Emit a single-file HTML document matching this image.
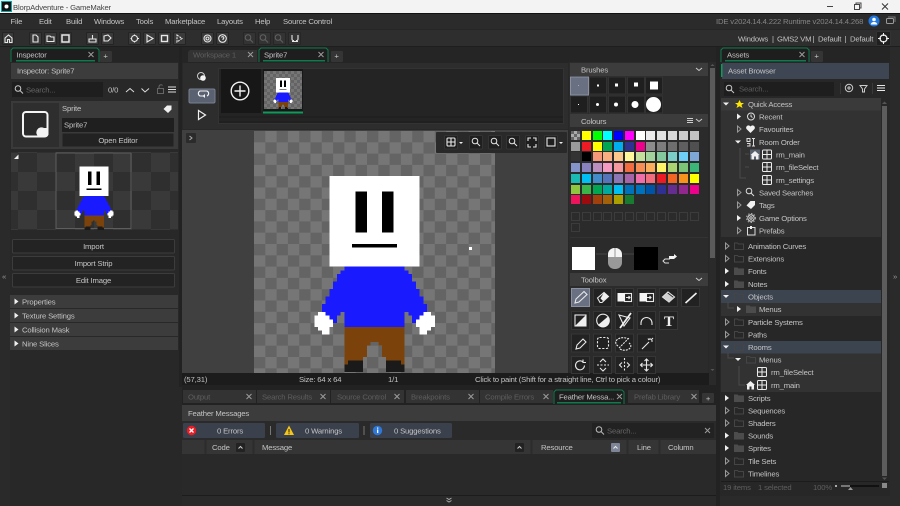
<!DOCTYPE html>
<html><head><meta charset="utf-8"><title>BlorpAdventure - GameMaker</title>
<style>
html,body{margin:0;padding:0;background:#282828;width:900px;height:506px;overflow:hidden}
svg{display:block}
text{font-family:"Liberation Sans",sans-serif;font-size:7.7px;letter-spacing:-.16px;fill:#c4c4c4;white-space:pre}
.m{text-anchor:middle}
.i{fill:none;stroke:#e8e8e8;stroke-width:1.1}
</style></head><body>
<svg width="900" height="506" viewBox="0 0 900 506" xmlns="http://www.w3.org/2000/svg">
<defs>
<pattern id="ck" width="22.6" height="22.6" patternUnits="userSpaceOnUse" x="254" y="131"><rect width="22.6" height="22.6" fill="#767676"/><rect width="11.3" height="11.3" fill="#646464"/><rect x="11.3" y="11.3" width="11.3" height="11.3" fill="#646464"/></pattern>
<pattern id="ck2" width="6" height="6" patternUnits="userSpaceOnUse" x="264" y="71"><rect width="6" height="6" fill="#767676"/><rect width="3" height="3" fill="#646464"/><rect x="3" y="3" width="3" height="3" fill="#646464"/></pattern>
<pattern id="ck4" width="6" height="6" patternUnits="userSpaceOnUse" x="571" y="131"><rect width="6" height="6" fill="#aaa"/><rect width="3" height="3" fill="#666"/><rect x="3" y="3" width="3" height="3" fill="#666"/></pattern>
<pattern id="ck3" width="38" height="38" patternUnits="userSpaceOnUse" x="18" y="153"><rect width="38" height="38" fill="#393939"/><rect width="19" height="19" fill="#2f2f2f"/><rect x="19" y="19" width="19" height="19" fill="#2f2f2f"/></pattern>
<symbol id="sp" viewBox="0 0 64 64" overflow="hidden"><g shape-rendering="crispEdges">
<path fill="#1a1aff" d="M24 36H40V37H41V38H42V40H43V42H44V44H45V46H46V48H47V49H44V51H42V49H41V48H40V52H24V48H23V49H22V51H20V49H17V48H18V46H19V44H20V42H21V40H22V38H23V37H24z"/>
<path fill="#7b430b" d="M24 52H40V62H39V61H35V60H34V57H33V56H31V57H30V60H29V61H25V62H24z"/>
<path fill="#1a1a1a" d="M24 62H25V61H29V64H24zM35 61H39V62H40V64H35z"/>
<path fill="#fff" d="M20 12h24v24H20z"/>
<path fill="#000" d="M27 16h3v11h-3zM34 16h3v11h-3zM26 30h12v1H26z"/>
<path fill="#fff" d="M17 48H19V49H20V50H21V52H20V53H20V54H18V53H17V52H16V49H17zM45 48H47V49H48V52H47V53H46V54H44V52H43V50H44V49H45z"/>
</g></symbol>
<path id="tf" d="M0-3L4 0L0 3z" fill="#f0f0f0"/>
<path id="to" d="M.5-3L4 0L.5 3z" fill="none" stroke="#9a9a9a"/>
<path id="td" d="M-3-1.500H3L0 1.500z" fill="#f0f0f0"/>
<path id="ff" d="M0-3.500H3.500L4.500-2.500H10V4H0z" fill="#4c4c4c"/>
<path id="fo" d="M.5-3H3.500L4.500-2H9.500V3.500H.5z" fill="none" stroke="#454545"/>
<g id="rm" fill="none" stroke="#ececec" stroke-width="1"><rect x=".5" y="-4.500" width="9" height="9" rx="1"/><path d="M5-4.500V4.500M.5 0H9.500"/></g>
<path id="hm" d="M0 0L4.500-4L9 0H8V4.500H5.500V1.500H3.500V4.500H1V0z" fill="#f0f0f0"/>
<path id="x" d="M-2.500-2.500L2.500 2.500M2.500-2.500L-2.500 2.500" fill="none" stroke="#9c9c9c" stroke-width="1"/>
<g id="mag" fill="none" stroke-width="1"><circle cx="-1" cy="-1" r="2.800"/><path d="M1 1L4 4"/></g>
</defs>

<rect width="900" height="506" fill="#282828"/>
<!-- title bar -->
<rect width="900" height="13.500" fill="#f3f3f3"/>
<rect y="13" width="900" height="1" fill="#111"/>
<rect x="2" y="2" width="9" height="9" fill="#111"/><rect x="1.500" y="1.500" width="10" height="10" fill="none" stroke="#0aa"/><circle cx="6.500" cy="6.500" r="2" fill="#fff"/>
<text x="13" y="10" style="fill:#444">BlorpAdventure - GameMaker</text>
<path d="M827 6.500H833" stroke="#444"/><rect x="854.500" y="4.500" width="5" height="5" fill="none" stroke="#444"/><path d="M856 4V3H861V8H860" fill="none" stroke="#444"/>
<path d="M882 3.500L888 9.500M888 3.500L882 9.500" stroke="#333"/>

<!-- menu -->
<rect y="14" width="900" height="15" fill="#2b2b2b"/>
<text x="10.500" y="24">File</text><text x="39" y="24">Edit</text><text x="66" y="24">Build</text><text x="94" y="24">Windows</text><text x="136" y="24">Tools</text><text x="165" y="24">Marketplace</text><text x="217" y="24">Layouts</text><text x="255" y="24">Help</text><text x="283" y="24">Source Control</text>
<text x="716" y="24" style="fill:#858585">IDE v2024.14.4.222</text><text x="783" y="24" style="fill:#858585">Runtime v2024.14.4.268</text>
<circle cx="874" cy="21" r="5.500" fill="#2277dd"/><circle cx="874" cy="19.500" r="1.800" fill="#fff"/><path d="M870.800 24.500a3.200 2.600 0 0 1 6.400 0z" fill="#fff"/>
<rect x="886.500" y="18.500" width="7" height="5" rx="1" fill="none" stroke="#999"/><path d="M888 17H895V22" fill="none" stroke="#777"/>

<!-- toolbar -->
<rect y="29" width="900" height="17" fill="#2e2e2e"/>
<rect y="29" width="900" height="1" fill="#262626"/>
<g fill="#3a3a3a" stroke="#242424">
<rect x="2.500" y="32.500" width="11" height="12" rx="1"/><rect x="29.500" y="32.500" width="12" height="12" rx="1"/><rect x="44.500" y="32.500" width="12" height="12" rx="1"/><rect x="59.500" y="32.500" width="12" height="12" rx="1"/><rect x="86.500" y="32.500" width="12" height="12" rx="1"/><rect x="101.500" y="32.500" width="12" height="12" rx="1"/><rect x="128.500" y="32.500" width="12" height="12" rx="1"/><rect x="143.500" y="32.500" width="12" height="12" rx="1"/><rect x="158.500" y="32.500" width="12" height="12" rx="1"/><rect x="173.500" y="32.500" width="12" height="12" rx="1"/><rect x="201.500" y="32.500" width="12" height="12" rx="1"/><rect x="216.500" y="32.500" width="12" height="12" rx="1"/>
</g>
<g fill="#333" stroke="#262626"><rect x="243.500" y="32.500" width="12" height="12" rx="1"/><rect x="258.500" y="32.500" width="12" height="12" rx="1"/><rect x="273.500" y="32.500" width="12" height="12" rx="1"/><rect x="288.500" y="32.500" width="12" height="12" rx="1"/></g>
<g class="i">
<path d="M5 38L8.500 35L12 38V42.500H9.500V39.500H7.500V42.500H5z"/>
<path d="M33 35H36L38 37V42H33z"/>
<path d="M47 36H50L51 37H54V41.500H47z"/>
<rect x="62" y="35" width="7" height="7" stroke-width="1.500"/>
<path d="M89 42V39H96V42zM92.500 39V35"/>
<path d="M104 41V36L108 35L111 38L108 41z"/>
<circle cx="134.500" cy="38.500" r="3"/><path d="M130.500 38.500H132M137 38.500H139M134.500 34.500V36M134.500 41V42.500"/>
<path d="M147 35L153 38.500L147 42z"/>
<rect x="161.500" y="35.500" width="6" height="6" stroke-width="1.400"/>
<path d="M177 35L182 38.500L177 42z" stroke-dasharray="2 1"/>
<circle cx="207.500" cy="38.500" r="3.500"/><circle cx="207.500" cy="38.500" r="1.500"/>
<circle cx="222.500" cy="38.500" r="3.800"/><path d="M221.500 37.500a1.200 1.200 0 1 1 1.500 1.500V40"/>
</g>
<g stroke="#626262"><use href="#mag" x="249" y="38.500"/><use href="#mag" x="264" y="38.500"/><use href="#mag" x="279" y="38.500"/></g>
<path d="M292 35V39a1.500 1.500 0 0 0 2 1.500M298 35V39a1.500 1.500 0 0 1-2 1.500M292 41.500H298" class="i"/>
<text x="738" y="41.500">Windows</text><text x="772" y="41.500">|</text><text x="777" y="41.500">GMS2 VM</text><text x="812.500" y="41.500">|</text><text x="818" y="41.500">Default</text><text x="844.500" y="41.500">|</text><text x="850" y="41.500">Default</text>
<rect x="876.500" y="31.500" width="14" height="14" rx="1" fill="#1f1f1f" stroke="#333"/><circle cx="883.500" cy="38.500" r="3.500" fill="none" stroke="#f0f0f0" stroke-width="1.300"/><path d="M883.500 33V36M883.500 41V44M878 38.500H881M886 38.500H889" stroke="#f0f0f0"/>

<!-- tabs row -->
<rect y="46" width="900" height="1" fill="#1e1e1e"/>
<rect y="47" width="900" height="16" fill="#252525"/>
<rect x="0" y="47" width="10" height="459" fill="#2a2a2a"/>
<rect x="179" y="47" width="3" height="340" fill="#222"/>
<rect x="890" y="47" width="10" height="459" fill="#2a2a2a"/>
<rect x="716" y="47" width="4" height="459" fill="#222"/>

<!-- LEFT PANEL -->
<rect x="11" y="62" width="168" height="444" fill="#282828"/>
<path d="M11 62V50l2-2H97l2 2V62" fill="#1e1e1e" stroke="#0f7a4d"/>
<rect x="16" y="60" width="79" height="1.500" fill="#0f7a4d"/>
<text x="16.500" y="57.500">Inspector</text><use href="#x" x="91" y="54.500"/>
<rect x="100" y="51" width="12" height="11" rx="1" fill="#353535"/><text x="105.500" y="58.500" class="m">+</text>
<rect x="11" y="63" width="167" height="16" fill="#3c3c3c"/>
<text x="17" y="73.500">Inspector: Sprite7</text>
<rect x="12" y="82" width="91" height="15" fill="#1e1e1e"/>
<use href="#mag" x="19" y="89.500" stroke="#c8c8c8"/>
<text x="26" y="92.500" style="fill:#666">Search...</text>
<text x="108" y="92.500">0/0</text>
<path d="M126 92L130 88.500L134 92M141.500 88.500L145 92L149 88.500" fill="none" stroke="#ddd"/>
<rect x="157.500" y="88.500" width="6" height="5" fill="none" stroke="#666"/><path d="M159 88.500V86.500a2 2 0 0 1 3.500-1" fill="none" stroke="#666"/>
<path d="M168 87H176M168 89.500H176M168 92H176" stroke="#ddd"/>
<rect x="11" y="101" width="167" height="48" fill="#3a3a3a"/>
<rect x="13" y="103" width="46" height="44" fill="#2e2e2e"/>
<rect x="23" y="112" width="24.500" height="24.500" rx="3" fill="#2a2a2a" stroke="#f4f4f4" stroke-width="2"/>
<path d="M48.500 128V134a3 3 0 0 1-3 3H39a5 5 0 0 1 5-9z" fill="#f4f4f4"/>
<text x="62" y="111">Sprite</text>
<path d="M163.500 109L167 105.500H171.500V109.500L168 113z" fill="#f0f0f0"/>
<rect x="62" y="118" width="112" height="14" fill="#1f1f1f"/><text x="64" y="127.500">Sprite7</text>
<rect x="62.500" y="133.500" width="111" height="13" fill="#222"/><text x="118" y="143" class="m">Open Editor</text>
<rect x="11" y="152" width="167" height="78" fill="url(#ck3)"/>
<rect x="56" y="153" width="75" height="75.500" fill="none" stroke="#5e5e5e"/>
<svg x="55" y="152" width="78" height="78"><use href="#sp" width="78" height="78"/></svg>
<path d="M14 159L18.500 154.500V159z" fill="#f0f0f0"/>
<g fill="#232323" stroke="#3c3c3c"><rect x="12.500" y="239.500" width="162" height="13.500" rx="1"/><rect x="12.500" y="256.500" width="162" height="13.500" rx="1"/><rect x="12.500" y="273.500" width="162" height="13.500" rx="1"/></g>
<text x="93.500" y="249" class="m">Import</text><text x="93.500" y="266" class="m">Import Strip</text><text x="93.500" y="283" class="m">Edit Image</text>
<g fill="#3c3c3c"><rect x="10" y="295" width="168" height="13"/><rect x="10" y="309" width="168" height="13"/><rect x="10" y="323" width="168" height="13"/><rect x="10" y="337" width="168" height="13"/></g>
<use href="#tf" x="14.500" y="301.500"/><use href="#tf" x="14.500" y="315.500"/><use href="#tf" x="14.500" y="329.500"/><use href="#tf" x="14.500" y="343.500"/>
<text x="22" y="304.500">Properties</text><text x="22" y="318.500">Texture Settings</text><text x="22" y="332.500">Collision Mask</text><text x="22" y="346.500">Nine Slices</text>
<text x="4" y="279" class="m" style="fill:#999">«</text>
<text x="895" y="279" class="m" style="fill:#999">»</text>

<!-- CENTRE tabs -->
<path d="M188 62V52l2-2H257V62z" fill="#333"/><text x="193" y="57.500" style="fill:#5e5e5e">Workspace 1</text><use href="#x" x="250.500" y="54.500"/>
<path d="M259 62V50l2-2H326l2 2V62" fill="#1e1e1e" stroke="#0f7a4d"/><rect x="263" y="60" width="62" height="1.500" fill="#0f7a4d"/>
<text x="264" y="57.500">Sprite7</text><use href="#x" x="321" y="54.500"/>
<rect x="331" y="51" width="12" height="11" rx="1" fill="#353535"/><text x="336.500" y="58.500" class="m">+</text>

<!-- frame strip -->
<rect x="183" y="63" width="385" height="66" fill="#2d2d2d"/>
<rect x="218.500" y="68.500" width="345" height="55" fill="#242424" stroke="#333"/>
<rect x="221" y="69" width="40" height="44" fill="#171717"/>
<circle cx="240" cy="91" r="8.800" fill="none" stroke="#f2f2f2" stroke-width="1.400"/><path d="M240 85.500V96.500M234.500 91H245.500" stroke="#f2f2f2" stroke-width="1.400"/>
<rect x="263" y="69" width="40" height="43" fill="#171717"/>
<rect x="264" y="71" width="38" height="38" fill="url(#ck2)"/>
<svg x="264" y="71" width="38" height="38"><use href="#sp" width="38" height="38"/></svg>
<rect x="263" y="111.500" width="40" height="2" fill="#0d9a5b"/>
<path d="M219 117H563M219 122H563" stroke="#1c1c1c"/>
<circle cx="201" cy="76" r="3.500" fill="none" stroke="#ccc"/><circle cx="203" cy="78" r="2.800" fill="#f4f4f4"/>
<rect x="189" y="89" width="26" height="14" rx="1.500" fill="#5a6171" stroke="#78808f"/>
<path d="M207 96a3 2.800 0 0 0 0-5H200a3 2.800 0 0 0 0 5h4" fill="none" stroke="#f4f4f4" stroke-width="1.100"/><path d="M205 94L202.500 96L205 98z" fill="#f4f4f4"/>
<path d="M198.500 110.500L205.500 115L198.500 119.500z" fill="none" stroke="#f0f0f0" stroke-width="1.200"/>

<!-- canvas -->
<rect x="182" y="130" width="386" height="243" fill="#404040"/>
<rect x="186" y="133" width="10" height="10" rx="1" fill="#2b2b2b"/><path d="M189.500 136L192 138L189.500 140" fill="none" stroke="#aaa"/>
<rect x="254" y="131" width="241" height="242" fill="url(#ck)"/>
<svg x="254" y="131" width="241" height="241"><use href="#sp" width="241" height="241"/></svg>
<rect x="469" y="247" width="3" height="3" fill="#fff"/>
<rect x="436" y="132" width="131" height="21" rx="1" fill="#292929"/>
<g fill="#1f1f1f" stroke="#333"><rect x="444.500" y="135.500" width="13" height="13.500" rx="1"/><rect x="469.500" y="135.500" width="13" height="13.500" rx="1"/><rect x="488.500" y="135.500" width="13" height="13.500" rx="1"/><rect x="506.500" y="135.500" width="13" height="13.500" rx="1"/><rect x="525.500" y="135.500" width="13" height="13.500" rx="1"/><rect x="544.500" y="135.500" width="13" height="13.500" rx="1"/></g>
<g class="i"><rect x="447" y="138" width="8" height="8" rx="1"/><path d="M451 138V146M447 142H455"/><path d="M528 141V138H531M533 138H536V141M536 144V147H533M531 147H528V144"/><rect x="547" y="138" width="8" height="8"/></g>
<g stroke="#e4e4e4"><use href="#mag" x="476" y="142"/><use href="#mag" x="495" y="142"/><use href="#mag" x="513" y="142"/></g>
<path d="M459 142H463L461 144z" fill="#eee"/><path d="M559 142H563L561 144z" fill="#eee"/>

<!-- status bar -->
<rect x="182" y="373" width="534" height="12" fill="#1c1c1c"/>
<text x="184" y="382">(57,31)</text><text x="299" y="382">Size: 64 x 64</text><text x="388" y="382">1/1</text><text x="475" y="382">Click to paint (Shift for a straight line, Ctrl to pick a colour)</text>

<!-- RIGHT TOOL PANEL -->
<rect x="569" y="62" width="139" height="311" fill="#2b2b2b"/>
<rect x="570" y="63" width="138" height="13" fill="#3c3c3c"/><text x="581" y="72.500">Brushes</text><path d="M696 68L699 70.500L702 68" fill="none" stroke="#ccc"/>
<g fill="#1f1f1f" stroke="#333"><rect x="589.500" y="77" width="17" height="17"/><rect x="608.500" y="77" width="17" height="17"/><rect x="627.500" y="77" width="17" height="17"/><rect x="645.500" y="77" width="17" height="17"/><rect x="570.500" y="96" width="17" height="17"/><rect x="589.500" y="96" width="17" height="17"/><rect x="608.500" y="96" width="17" height="17"/><rect x="627.500" y="96" width="17" height="17"/><rect x="645.500" y="96" width="17" height="17"/></g>
<rect x="570.500" y="77" width="18" height="18" fill="#687082" stroke="#8a90a0"/><rect x="578" y="85" width="1" height="1" fill="#aaa"/>
<g fill="#fff"><rect x="597" y="84.500" width="2" height="2"/><rect x="615" y="83.500" width="3" height="3"/><rect x="634" y="82.500" width="4" height="4"/><rect x="650" y="81.500" width="8" height="8"/><rect x="578" y="104" width="1" height="1"/><circle cx="597.500" cy="104.500" r="1.500"/><circle cx="616" cy="104.500" r="2"/><circle cx="635" cy="104.500" r="3.500"/><circle cx="653.500" cy="104.500" r="7.500"/></g>
<rect x="570" y="114" width="138" height="13" fill="#3c3c3c"/><text x="581" y="124">Colours</text><path d="M687 118.500H693M687 120.500H693M687 122.500H693" stroke="#ccc"/><path d="M696 119L699 121.500L702 119" fill="none" stroke="#ccc"/>
<!-- palette -->
<g shape-rendering="crispEdges">
<rect x="571" y="131" width="9" height="9" fill="url(#ck4)"/>
<rect x="582" y="131" width="9" height="9" fill="#ff0"/><rect x="593" y="131" width="9" height="9" fill="#0f0"/><rect x="603" y="131" width="9" height="9" fill="#0ff"/><rect x="614" y="131" width="9" height="9" fill="#00f"/><rect x="625" y="131" width="9" height="9" fill="#f0f"/><rect x="636" y="131" width="9" height="9" fill="#fff"/><rect x="646" y="131" width="9" height="9" fill="#ebebeb"/><rect x="657" y="131" width="9" height="9" fill="#e1e1e1"/><rect x="668" y="131" width="9" height="9" fill="#d7d7d7"/><rect x="679" y="131" width="9" height="9" fill="#cdcdcd"/><rect x="690" y="131" width="9" height="9" fill="#c3c3c3"/>
<rect x="571" y="142" width="9" height="9" fill="#9a9a9a"/><rect x="582" y="142" width="9" height="9" fill="#ed1c24"/><rect x="593" y="142" width="9" height="9" fill="#ff0"/><rect x="603" y="142" width="9" height="9" fill="#00a651"/><rect x="614" y="142" width="9" height="9" fill="#00aeef"/><rect x="625" y="142" width="9" height="9" fill="#2e3192"/><rect x="636" y="142" width="9" height="9" fill="#ec008c"/><rect x="646" y="142" width="9" height="9" fill="#8c8c8c"/><rect x="657" y="142" width="9" height="9" fill="#7d7d7d"/><rect x="668" y="142" width="9" height="9" fill="#6e6e6e"/><rect x="679" y="142" width="9" height="9" fill="#5f5f5f"/><rect x="690" y="142" width="9" height="9" fill="#505050"/>
<rect x="571" y="152" width="9" height="9" fill="#333"/><rect x="582" y="152" width="9" height="9" fill="#000"/><rect x="593" y="152" width="9" height="9" fill="#f7977a"/><rect x="603" y="152" width="9" height="9" fill="#f9ad81"/><rect x="614" y="152" width="9" height="9" fill="#fdc68a"/><rect x="625" y="152" width="9" height="9" fill="#fff79a"/><rect x="636" y="152" width="9" height="9" fill="#c4df9b"/><rect x="646" y="152" width="9" height="9" fill="#a2d39c"/><rect x="657" y="152" width="9" height="9" fill="#82ca9d"/><rect x="668" y="152" width="9" height="9" fill="#7bcdc8"/><rect x="679" y="152" width="9" height="9" fill="#6ecff6"/><rect x="690" y="152" width="9" height="9" fill="#7ea7d8"/>
<rect x="571" y="163" width="9" height="9" fill="#8493ca"/><rect x="582" y="163" width="9" height="9" fill="#8882be"/><rect x="593" y="163" width="9" height="9" fill="#bc8dbf"/><rect x="603" y="163" width="9" height="9" fill="#f49ac2"/><rect x="614" y="163" width="9" height="9" fill="#f6989d"/><rect x="625" y="163" width="9" height="9" fill="#f26c3f"/><rect x="636" y="163" width="9" height="9" fill="#f68e55"/><rect x="646" y="163" width="9" height="9" fill="#fbaf5c"/><rect x="657" y="163" width="9" height="9" fill="#fff467"/><rect x="668" y="163" width="9" height="9" fill="#acd372"/><rect x="679" y="163" width="9" height="9" fill="#7cc576"/><rect x="690" y="163" width="9" height="9" fill="#3bb878"/>
<rect x="571" y="174" width="9" height="9" fill="#1abbb4"/><rect x="582" y="174" width="9" height="9" fill="#00bff3"/><rect x="593" y="174" width="9" height="9" fill="#438cca"/><rect x="603" y="174" width="9" height="9" fill="#5574b9"/><rect x="614" y="174" width="9" height="9" fill="#8e77b5"/><rect x="625" y="174" width="9" height="9" fill="#a864a8"/><rect x="636" y="174" width="9" height="9" fill="#f06eaa"/><rect x="646" y="174" width="9" height="9" fill="#f26d7d"/><rect x="657" y="174" width="9" height="9" fill="#ed1c24"/><rect x="668" y="174" width="9" height="9" fill="#f26522"/><rect x="679" y="174" width="9" height="9" fill="#f7941d"/><rect x="690" y="174" width="9" height="9" fill="#ff0"/>
<rect x="571" y="185" width="9" height="9" fill="#8dc63f"/><rect x="582" y="185" width="9" height="9" fill="#39b54a"/><rect x="593" y="185" width="9" height="9" fill="#00a651"/><rect x="603" y="185" width="9" height="9" fill="#00a99d"/><rect x="614" y="185" width="9" height="9" fill="#00bff3"/><rect x="625" y="185" width="9" height="9" fill="#0072bc"/><rect x="636" y="185" width="9" height="9" fill="#0072bc"/><rect x="646" y="185" width="9" height="9" fill="#0054a6"/><rect x="657" y="185" width="9" height="9" fill="#2e3192"/><rect x="668" y="185" width="9" height="9" fill="#662d91"/><rect x="679" y="185" width="9" height="9" fill="#92278f"/><rect x="690" y="185" width="9" height="9" fill="#ec008c"/>
<rect x="571" y="195" width="9" height="9" fill="#ed145b"/><rect x="582" y="195" width="9" height="9" fill="#9e0b0f"/><rect x="593" y="195" width="9" height="9" fill="#a0410d"/><rect x="603" y="195" width="9" height="9" fill="#a36209"/><rect x="614" y="195" width="9" height="9" fill="#aba000"/><rect x="625" y="195" width="9" height="9" fill="#197b30"/>
</g>
<g fill="none" stroke="#3c3c3c"><rect x="571.500" y="212.500" width="8" height="8"/><rect x="582.500" y="212.500" width="8" height="8"/><rect x="593.500" y="212.500" width="8" height="8"/><rect x="603.500" y="212.500" width="8" height="8"/><rect x="614.500" y="212.500" width="8" height="8"/><rect x="625.500" y="212.500" width="8" height="8"/><rect x="636.500" y="212.500" width="8" height="8"/><rect x="646.500" y="212.500" width="8" height="8"/><rect x="657.500" y="212.500" width="8" height="8"/><rect x="668.500" y="212.500" width="8" height="8"/><rect x="679.500" y="212.500" width="8" height="8"/><rect x="690.500" y="212.500" width="8" height="8"/><rect x="571.500" y="223.500" width="8" height="8"/></g>
<path d="M570 237.500H708" stroke="#333"/>
<rect x="572" y="247" width="23" height="23" fill="#fff"/>
<rect x="634" y="247" width="24" height="23" fill="#000"/>
<path d="M596 254H607M623 254H634" stroke="#444"/>
<rect x="608" y="248" width="14" height="21" rx="6.500" fill="#999"/><path d="M608 257V254.500A6.500 6.500 0 0 1 614.500 248V257zM615.500 248A6.500 6.500 0 0 1 622 254.500V257H615.500z" fill="#f4f4f4"/>
<path d="M670 259H665L663 261L665 263H669" fill="none" stroke="#ddd"/><path d="M669 256H674V254L677 256.500L674 259H669z" fill="#f4f4f4"/>
<rect x="570" y="273" width="138" height="13" fill="#3c3c3c"/><text x="581" y="282.500">Toolbox</text><path d="M696 278L699 280.500L702 278" fill="none" stroke="#ccc"/>
<g fill="#222" stroke="#363636">
<rect x="593.500" y="288.500" width="18" height="18"/><rect x="615.500" y="288.500" width="18" height="18"/><rect x="637.500" y="288.500" width="18" height="18"/><rect x="659.500" y="288.500" width="18" height="18"/><rect x="681.500" y="288.500" width="18" height="18"/>
<rect x="571.500" y="311.500" width="18" height="18"/><rect x="593.500" y="311.500" width="18" height="18"/><rect x="615.500" y="311.500" width="18" height="18"/><rect x="637.500" y="311.500" width="18" height="18"/><rect x="659.500" y="311.500" width="18" height="18"/>
<rect x="571.500" y="334" width="18" height="18"/><rect x="593.500" y="334" width="18" height="18"/><rect x="615.500" y="334" width="18" height="18"/><rect x="637.500" y="334" width="18" height="18"/>
<rect x="571.500" y="356.500" width="18" height="17"/><rect x="593.500" y="356.500" width="18" height="17"/><rect x="615.500" y="356.500" width="18" height="17"/><rect x="637.500" y="356.500" width="18" height="17"/>
</g>
<rect x="571.500" y="288.500" width="18" height="18" fill="#687082" stroke="#8a90a0"/>
<g class="i">
<path d="M575 303L576 299L584 291.500L587 294.500L579 302z"/>
<path d="M597.500 298L604 292.500L608.500 296.500L602 302.500H600z"/>
<rect x="624.500" y="293.500" width="7" height="8"/><path d="M626 297.500H630M628.500 296L630 297.500L628.500 299"/>
<rect x="646.500" y="293.500" width="7" height="8"/><path d="M645 297.500H651M649.500 296L651 297.500L649.500 299"/>
<path d="M662.500 297L668 292L674.500 297L669 302z"/>
<rect x="575" y="315" width="11" height="11"/>
<circle cx="603" cy="320.500" r="6.300"/>
<path d="M619 315L630 318L624 326z"/>
<path d="M641 325V323A5.500 5.500 0 0 1 652 323V325"/>
</g>
<rect x="617.500" y="293" width="7.500" height="8.500" fill="#f4f4f4"/><rect x="639.500" y="293" width="7.500" height="8.500" fill="#f4f4f4"/>
<path d="M667 293L673.500 298L669 302L663 297z" fill="#cfcfcf"/>
<path d="M685.500 303L696.500 293" stroke="#f0f0f0" stroke-width="1.600"/>
<path d="M575 326L586 315V326z" fill="#f0f0f0"/><path d="M598 325L608 316.500A6.300 6.300 0 0 1 598 325z" fill="#f0f0f0"/><path d="M620 328L631 313" stroke="#f0f0f0" stroke-width="1.800"/>
<path d="M600.500 298.500L604 292.500L608.500 296.500L603 301z" fill="#f0f0f0"/>
<text x="669" y="326" class="m" style="font-size:15px;letter-spacing:0;fill:#efefef;font-family:'Liberation Serif',serif;font-weight:bold">T</text>
<g class="i">
<path d="M576 349L577 345L583 339L586 342L580 348z"/>
<rect x="597.500" y="337.500" width="11" height="11" rx="2" stroke-dasharray="2.200 1.500"/>
<path d="M618 346a6 4 0 0 1 10-7M620 349a6 4 0 0 0 9-6M619 348L629 338" stroke-dasharray="2 1"/>
<path d="M642 349L649 342M650 338V340M653 341H651M648 338.500L649 340M653 338L651 340"/>
<path d="M584.500 365.500a4.500 4.500 0 1 1-1.500-3.500M583 359.500V362.500H586"/>
<path d="M597 365H609" stroke-dasharray="2 1.500"/><path d="M600 362L603 359L606 362M600 368L603 371L606 368"/>
<path d="M624.500 358V372" stroke-dasharray="2 1.500"/><path d="M622 362.500L619.500 365L622 367.500M627 362.500L629.500 365L627 367.500"/>
<path d="M646.500 359V371M640.500 365H652.500M644.500 361L646.500 359L648.500 361M644.500 369L646.500 371L648.500 369M642.500 363L640.500 365L642.500 367M650.500 363L652.500 365L650.500 367"/>
</g>
<!-- panel scrollbar -->
<rect x="709" y="62" width="7" height="323" fill="#2a2a2a"/>
<rect x="710" y="68" width="5" height="190" fill="#5a5a5a"/>
<path d="M710.500 66H714.500L712.500 64z" fill="#555"/><path d="M710.500 369H714.500L712.500 371z" fill="#555"/>

<!-- BOTTOM -->
<rect x="182" y="385" width="534" height="121" fill="#222"/>
<g fill="#333"><rect x="183" y="390" width="73" height="13"/><rect x="257" y="390" width="73" height="13"/><rect x="331" y="390" width="73" height="13"/><rect x="406" y="390" width="73" height="13"/><rect x="480" y="390" width="73" height="13"/><rect x="628" y="390" width="71" height="13"/></g>
<text x="188" y="399.500" style="fill:#5e5e5e">Output</text><text x="262" y="399.500" style="fill:#5e5e5e">Search Results</text><text x="337" y="399.500" style="fill:#5e5e5e">Source Control</text><text x="411" y="399.500" style="fill:#5e5e5e">Breakpoints</text><text x="485" y="399.500" style="fill:#5e5e5e">Compile Errors</text><text x="634" y="399.500" style="fill:#5e5e5e">Prefab Library</text>
<use href="#x" x="249" y="396.500"/><use href="#x" x="323" y="396.500"/><use href="#x" x="397" y="396.500"/><use href="#x" x="471" y="396.500"/><use href="#x" x="546" y="396.500"/><use href="#x" x="694" y="396.500"/>
<path d="M554 404V392l2-2H622l2 2V404" fill="#1e1e1e" stroke="#0f7a4d"/><rect x="557" y="402" width="64" height="1.500" fill="#0f7a4d"/>
<text x="559" y="399.500">Feather Messa...</text><use href="#x" x="619.500" y="396.500"/>
<rect x="702" y="393" width="12" height="10" rx="1" fill="#353535"/><text x="708" y="401" class="m">+</text>
<rect x="182" y="405" width="534" height="16" fill="#3c3c3c"/><text x="188" y="416">Feather Messages</text>
<rect x="182" y="421" width="534" height="19" fill="#2a2a2a"/>
<rect x="183" y="423" width="82" height="15" rx="1.500" fill="#3a404c"/><circle cx="191.500" cy="430.500" r="4.700" fill="#ed1c24"/><path d="M189.500 428.500L193.500 432.500M193.500 428.500L189.500 432.500" stroke="#fff" stroke-width="1.300"/>
<text x="217" y="433.500">0 Errors</text><rect x="270" y="426" width="1" height="9" fill="#777"/>
<rect x="276" y="423" width="83" height="15" rx="1.500" fill="#3a404c"/><path d="M284 435L289 425.500L294 435z" fill="#f5c518"/><path d="M289 429V432.500M289 433.300V434.200" stroke="#222"/>
<text x="305" y="433.500">0 Warnings</text><rect x="363.500" y="426" width="1" height="9" fill="#777"/>
<rect x="370" y="423" width="82" height="15" rx="1.500" fill="#3a404c"/><circle cx="377.500" cy="430.500" r="4.700" fill="#2f78d8"/><rect x="377" y="429.500" width="1.300" height="3.500" fill="#fff"/><rect x="377" y="427.500" width="1.300" height="1.200" fill="#fff"/>
<text x="394" y="433.500">0 Suggestions</text>
<rect x="592" y="423" width="122" height="15" fill="#222"/><use href="#mag" x="600" y="430.500" stroke="#bbb"/><text x="607" y="433.500" style="fill:#666">Search...</text><use href="#x" x="707.500" y="430.500"/>
<rect x="182" y="440" width="534" height="14" fill="#353535"/>
<path d="M205.500 440V454M253.500 440V454M531.500 440V454M627.500 440V454M659.500 440V454" stroke="#2c2c2c" stroke-width="2"/>
<text x="212" y="450">Code</text><text x="262" y="450">Message</text><text x="541" y="450">Resource</text><text x="637" y="450">Line</text><text x="668" y="450">Column</text>
<rect x="236" y="443" width="9" height="9" rx="1" fill="#222"/><path d="M238.500 448.500L240.500 446.500L242.500 448.500" fill="none" stroke="#ccc"/>
<rect x="515" y="443" width="9" height="9" rx="1" fill="#222"/><path d="M517.500 448.500L519.500 446.500L521.500 448.500" fill="none" stroke="#ccc"/>
<rect x="611" y="443" width="9" height="9" rx="1" fill="#7d8597"/><path d="M613.500 448.500L615.500 446.500L617.500 448.500" fill="none" stroke="#eee"/>
<rect x="182" y="454" width="534" height="41" fill="#292929"/>
<rect x="182" y="495" width="534" height="1" fill="#1c1c1c"/>
<rect x="182" y="496" width="534" height="10" fill="#2a2a2a"/>
<path d="M446.500 498L449 499.500L451.500 498M446.500 500.500L449 502L451.500 500.500" fill="none" stroke="#aaa"/>

<!-- ASSETS -->
<rect x="720" y="62" width="170" height="444" fill="#272727"/>
<path d="M721 62V50l2-2H807l2 2V62" fill="#1e1e1e" stroke="#0f7a4d"/><rect x="725" y="60" width="81" height="1.500" fill="#0f7a4d"/>
<text x="727" y="57.500">Assets</text><use href="#x" x="802" y="54.500"/>
<rect x="811" y="51" width="12" height="11" rx="1" fill="#353535"/><text x="816.500" y="58.500" class="m">+</text>
<rect x="722" y="63" width="167" height="16" fill="#3e4553"/><rect x="721" y="64" width="1.500" height="13" fill="#0d9a5b"/>
<text x="728" y="73.500">Asset Browser</text>
<rect x="724" y="82" width="110" height="14" fill="#1e1e1e"/><use href="#mag" x="730" y="89" stroke="#c8c8c8"/><text x="739" y="91.500" style="fill:#5e5e5e">Search...</text>
<circle cx="849" cy="88" r="3.700" fill="none" stroke="#ccc"/><path d="M847 88H851M849 86V90" stroke="#ccc"/>
<path d="M860 85.500H867L864.500 89V92H862.500V89z" fill="none" stroke="#ccc"/>
<path d="M877 85.500H885M877 88H885M877 90.500H885" stroke="#e8e8e8"/>
<path d="M840.500 83V94M872.500 83V94" stroke="#3a3a3a"/>

<rect x="721" y="98" width="160" height="139" fill="#323232"/>
<rect x="721" y="98" width="160" height="12.500" fill="#3a3a3a"/>
<rect x="721" y="290" width="160" height="26" fill="#323232"/><rect x="721" y="290" width="160" height="13" fill="#3c4450"/>
<rect x="721" y="341" width="160" height="51" fill="#323232"/><rect x="721" y="341" width="160" height="12.500" fill="#3c4450"/>
<rect x="882" y="106" width="5" height="370" fill="#5c5c5c"/>
<path d="M882 104H887L884.500 101.500z" fill="#555"/><path d="M882 477.500H887L884.500 480z" fill="#555"/>

<!-- tree -->
<use href="#td" x="726" y="104"/>
<path d="M739.500 100L741 103H744L741.500 105L742.500 108L739.500 106.200L736.500 108L737.500 105L735 103H738z" fill="#ffe600"/>
<use href="#tf" x="737" y="116.500"/><use href="#to" x="737" y="129"/><use href="#td" x="738" y="142"/>
<use href="#to" x="737" y="192.500"/><use href="#to" x="737" y="205"/><use href="#tf" x="737" y="218"/><use href="#to" x="737" y="230.500"/>
<circle cx="751" cy="116.500" r="3.500" fill="none" stroke="#ddd"/><path d="M751 114.500V116.500L752.500 117.500" fill="none" stroke="#ddd"/>
<path d="M750.500 133L746.500 129A2.200 2.200 0 0 1 750.500 126.500A2.200 2.200 0 0 1 754.500 129z" fill="#f2f2f2"/>
<path d="M747 138.500H750V141.500H747zM747 143.500H750V146H747M753.500 138.500V146M752 138.500H755M752 146H755" fill="none" stroke="#ddd"/>
<use href="#mag" x="750" y="192" stroke="#ddd"/>
<path d="M746.500 205.500L750.500 201H755V205L751 209z" fill="#f0f0f0"/>
<circle cx="751" cy="218" r="3.200" fill="none" stroke="#ddd"/><circle cx="751" cy="218" r="1.200" fill="none" stroke="#ddd"/><circle cx="751" cy="218" r="4.500" fill="none" stroke="#aaa" stroke-dasharray="1.500 1.500"/>
<path d="M747.500 227.500H755V235H747.500z" fill="none" stroke="#ddd"/><path d="M750 226H752V229H750z" fill="#f0f0f0"/>
<path d="M740 148V178H746M745 154H749M745 167H749" stroke="#4a4a4a" fill="none"/>
<rect x="750" y="149.500" width="10" height="10" fill="#59606e"/><use href="#hm" x="750.500" y="155"/>
<use href="#rm" x="762" y="154.500"/><use href="#rm" x="762" y="167"/><use href="#rm" x="762" y="180"/>

<use href="#to" x="725" y="246"/><use href="#fo" x="734" y="246"/>
<use href="#to" x="725" y="258.500"/><use href="#fo" x="734" y="258.500"/>
<use href="#tf" x="725" y="271"/><use href="#ff" x="734" y="271"/>
<use href="#tf" x="725" y="284"/><use href="#ff" x="734" y="284"/>
<use href="#td" x="726" y="296.500"/><use href="#fo" x="734" y="296.500"/>
<use href="#tf" x="737" y="309"/><use href="#ff" x="746" y="309"/>
<use href="#to" x="725" y="322"/><use href="#fo" x="734" y="322"/>
<use href="#to" x="725" y="334.500"/><use href="#fo" x="734" y="334.500"/>
<use href="#td" x="726" y="347"/><use href="#fo" x="734" y="347"/>
<use href="#td" x="738" y="359.500"/><use href="#fo" x="746" y="359.500"/>
<use href="#rm" x="757" y="372"/><use href="#hm" x="746" y="385"/><use href="#rm" x="757" y="385"/>
<use href="#tf" x="725" y="398"/><use href="#ff" x="734" y="398"/>
<use href="#to" x="725" y="410.500"/><use href="#fo" x="734" y="410.500"/>
<use href="#to" x="725" y="423"/><use href="#fo" x="734" y="423"/>
<use href="#tf" x="725" y="435.500"/><use href="#ff" x="734" y="435.500"/>
<use href="#tf" x="725" y="448"/><use href="#ff" x="734" y="448"/>
<use href="#to" x="725" y="461"/><use href="#fo" x="734" y="461"/>
<use href="#to" x="725" y="473.500"/><use href="#fo" x="734" y="473.500"/>
<path d="M728 302V308H734M728 353V358H734M739 366V385H745" fill="none" stroke="#4a4a4a"/>

<text x="748" y="107">Quick Access</text><text x="759" y="119.500">Recent</text><text x="759" y="132">Favourites</text><text x="759" y="145">Room Order</text><text x="776" y="157.500">rm_main</text><text x="776" y="170">rm_fileSelect</text><text x="776" y="183">rm_settings</text><text x="759" y="195.500">Saved Searches</text><text x="759" y="208">Tags</text><text x="759" y="221">Game Options</text><text x="759" y="233.500">Prefabs</text>
<text x="748" y="249">Animation Curves</text><text x="748" y="261.500">Extensions</text><text x="748" y="274">Fonts</text><text x="748" y="287">Notes</text><text x="748" y="299.500">Objects</text><text x="759" y="312">Menus</text><text x="748" y="325">Particle Systems</text><text x="748" y="337.500">Paths</text><text x="748" y="350">Rooms</text><text x="759" y="362.500">Menus</text><text x="771" y="375">rm_fileSelect</text><text x="771" y="388">rm_main</text><text x="748" y="401">Scripts</text><text x="748" y="413.500">Sequences</text><text x="748" y="426">Shaders</text><text x="748" y="438.500">Sounds</text><text x="748" y="451">Sprites</text><text x="748" y="464">Tile Sets</text><text x="748" y="476.500">Timelines</text>

<rect x="721" y="481" width="168" height="1" fill="#1c1c1c"/>
<text x="723" y="490" style="fill:#5e5e5e">19 items</text><text x="758" y="490" style="fill:#5e5e5e">1 selected</text><text x="813" y="490" style="fill:#5e5e5e">100%</text>
<rect x="835" y="485" width="2" height="2" fill="#aaa"/><rect x="841" y="485" width="38" height="2" fill="#111"/><rect x="841" y="485" width="9" height="2" fill="#777"/><path d="M848 490L850.500 487L853 490z" fill="#999"/><rect x="882" y="483" width="5" height="5" fill="#888"/>
<rect x="720" y="496" width="170" height="10" fill="#2a2a2a"/>
</svg>
</body></html>
